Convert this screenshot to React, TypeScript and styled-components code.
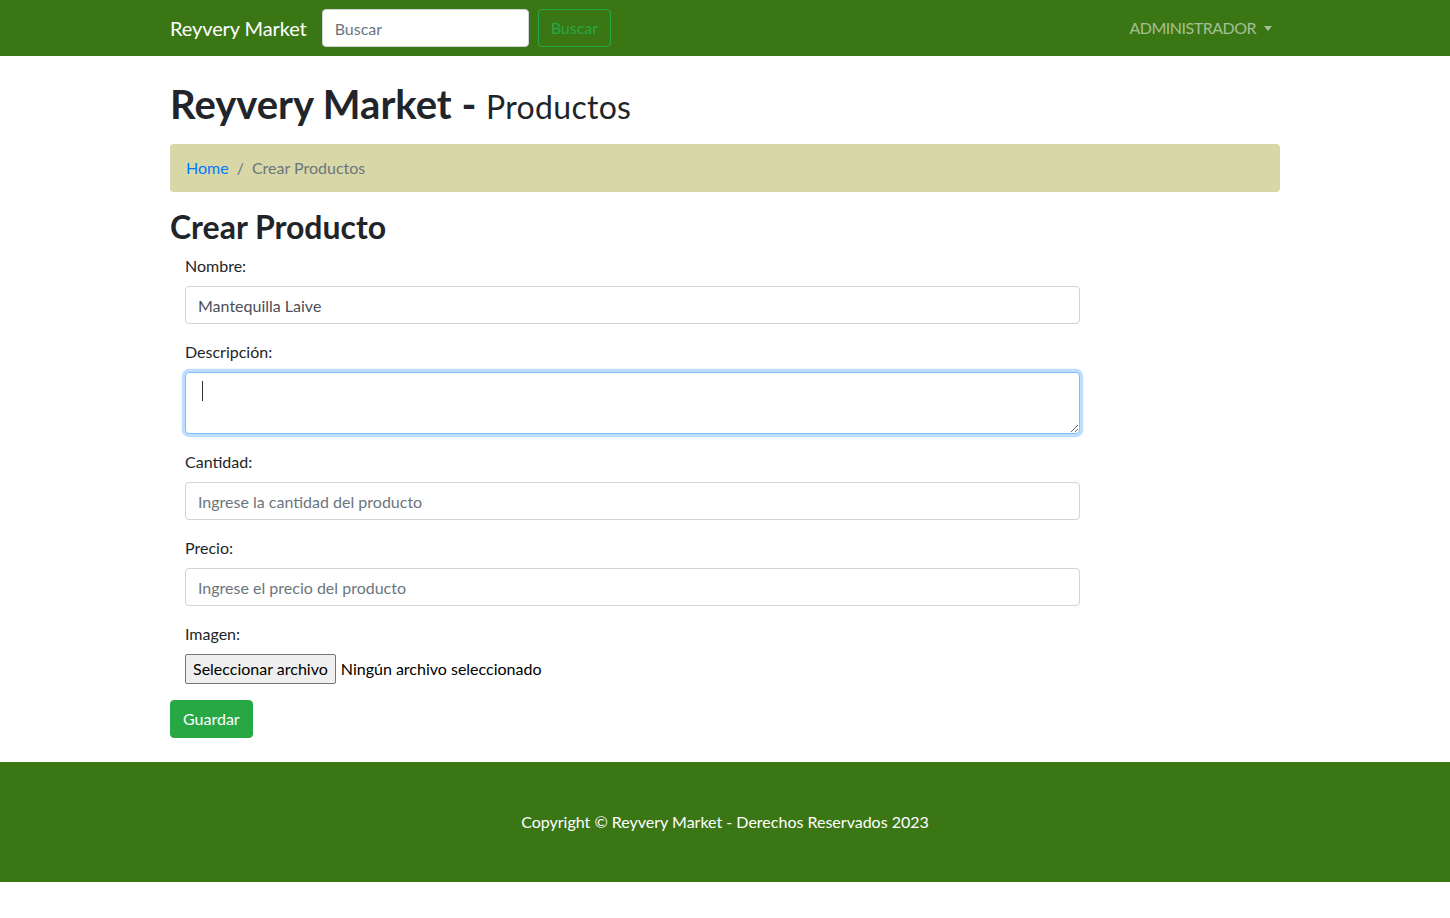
import React from 'react'
import styled, { createGlobalStyle } from 'styled-components'

//--------------------------------------
// constants
//--------------------------------------
const Colors = {
  green: '#3b7615',
  success: '#28a745',
  text: '#212529',
  muted: '#6c757d',
  link: '#007bff',
  crumb: '#d8d7a7',
  border: '#ced4da',
}

const GlobalStyle = createGlobalStyle`
  html, body {
    margin: 0;
    padding: 0;
    background: #fff;
  }
  body {
    font-family: Lato, "Noto Sans", "Liberation Sans", sans-serif;
    font-size: 16px;
    line-height: 1.5;
    color: ${Colors.text};
  }
  * { box-sizing: border-box; }
`

//--------------------------------------
// style
//--------------------------------------
const Container = styled.div`
  width: 1140px;
  margin: 0 auto;
  padding: 0 15px;
`

const NavBar = styled.nav`
  background-color: ${Colors.green};
  height: 56px;
`

const NavInner = styled(Container)`
  height: 100%;
  display: flex;
  align-items: center;
`

const Brand = styled.a`
  color: #fff;
  font-size: 20px;
  line-height: 30px;
  margin-right: 15px;
  letter-spacing: -0.1px;
  text-decoration: none;
`

const SearchForm = styled.form`
  display: flex;
  align-items: center;
  gap: 9px;
`

const SearchInput = styled.input`
  width: 207px;
  height: 38px;
  padding: 6px 12px;
  border: 1px solid ${Colors.border};
  border-radius: 4px;
  font: inherit;
  color: #495057;
  &::placeholder { color: #6c757d; }
`

const OutlineButton = styled.button`
  height: 38px;
  padding: 6px 12px;
  background: transparent;
  border: 1px solid ${Colors.success};
  border-radius: 4px;
  color: ${Colors.success};
  font: inherit;
`

const NavRight = styled.div`
  margin-left: auto;
  display: flex;
  align-items: center;
  gap: 8px;
  padding-right: 8px;
  color: rgba(255, 255, 255, 0.55);
  font-size: 16px;
  letter-spacing: -0.5px;
`

const Caret = styled.span`
  display: inline-block;
  width: 0;
  height: 0;
  border-top: 5px solid rgba(255, 255, 255, 0.55);
  border-left: 4px solid transparent;
  border-right: 4px solid transparent;
`

const Main = styled(Container)`
  padding-top: 24px;
  padding-bottom: 24px;
`

const Title = styled.h1`
  margin: 0 0 16px;
  font-size: 40px;
  line-height: 48px;
  height: 48px;
  font-weight: 700;
  small {
    font-size: 32px;
    font-weight: 400;
    line-height: 0;
    letter-spacing: 0.3px;
  }
`

const Breadcrumb = styled.ol`
  list-style: none;
  margin: 0 0 16px;
  padding: 12px 16px;
  background: ${Colors.crumb};
  border-radius: 4px;
  display: flex;
  color: ${Colors.muted};
`

const Crumb = styled.li`
  &:not(:first-child)::before {
    content: '/';
    padding: 0 8px;
    color: ${Colors.muted};
  }
  a {
    color: ${Colors.link};
    text-decoration: none;
  }
`

const SubTitle = styled.h2`
  margin: 0 0 8px;
  font-size: 32px;
  line-height: 38px;
  font-weight: 700;
`

const Form = styled.form`
  margin-bottom: 0;
`

const Group = styled.div`
  width: 925px;
  padding: 0 15px;
  margin-bottom: 16px;
`

const Label = styled.label`
  display: block;
  margin-bottom: 8px;
`

const Input = styled.input`
  display: block;
  width: 100%;
  height: 38px;
  padding: 6px 12px;
  border: 1px solid ${Colors.border};
  border-radius: 4px;
  font: inherit;
  color: #495057;
  &::placeholder { color: #6c757d; }
`

const TextArea = styled.textarea<{ $focus?: boolean }>`
  display: block;
  width: 100%;
  height: 62px;
  padding: 6px 12px;
  border: 1px solid ${(p) => (p.$focus ? '#80bdff' : Colors.border)};
  border-radius: 4px;
  font: inherit;
  color: #495057;
  box-shadow: ${(p) => (p.$focus ? '0 0 0 3.2px rgba(0, 123, 255, 0.25)' : 'none')};
  outline: none;
  resize: vertical;
`

const Cursor = styled.span`
  position: absolute;
  left: 17px;
  top: 9px;
  width: 1px;
  height: 20px;
  background: #333;
`

const TextAreaWrap = styled.div`
  position: relative;
`

const FileRow = styled.div`
  display: flex;
  align-items: center;
  gap: 5px;
  height: 30px;
`

const FileButton = styled.button`
  height: 30px;
  padding: 1px 7px;
  background: #efefef;
  border: 1px solid #767676;
  border-radius: 2px;
  font: inherit;
  color: #000;
`

const FileText = styled.span`
  color: #000;
`

const SaveButton = styled.button`
  height: 38px;
  padding: 6px 12px;
  background: ${Colors.success};
  border: 1px solid ${Colors.success};
  border-radius: 4px;
  color: #fff;
  font: inherit;
`

const Footer = styled.footer`
  background: ${Colors.green};
  height: 120px;
  display: flex;
  align-items: center;
  justify-content: center;
  color: #fff;
`

//----------------------------------
// component
//----------------------------------
const App = () => {
  return (
    <>
      <GlobalStyle />
      {/** @section Navbar */}
      <NavBar>
        <NavInner>
          <Brand href="#">Reyvery Market</Brand>
          <SearchForm onSubmit={(e) => e.preventDefault()}>
            <SearchInput placeholder="Buscar" />
            <OutlineButton type="button">Buscar</OutlineButton>
          </SearchForm>
          <NavRight>
            ADMINISTRADOR <Caret />
          </NavRight>
        </NavInner>
      </NavBar>

      {/** @section Content */}
      <Main>
        <Title>
          Reyvery Market - <small>Productos</small>
        </Title>
        <Breadcrumb>
          <Crumb>
            <a href="#">Home</a>
          </Crumb>
          <Crumb>Crear Productos</Crumb>
        </Breadcrumb>

        <SubTitle>Crear Producto</SubTitle>
        <Form onSubmit={(e) => e.preventDefault()}>
          <Group>
            <Label>Nombre:</Label>
            <Input defaultValue="Mantequilla Laive" />
          </Group>
          <Group>
            <Label>Descripción:</Label>
            <TextAreaWrap>
              <TextArea $focus rows={2} />
              <Cursor />
            </TextAreaWrap>
          </Group>
          <Group>
            <Label>Cantidad:</Label>
            <Input placeholder="Ingrese la cantidad del producto" />
          </Group>
          <Group>
            <Label>Precio:</Label>
            <Input placeholder="Ingrese el precio del producto" />
          </Group>
          <Group>
            <Label>Imagen:</Label>
            <FileRow>
              <FileButton type="button">Seleccionar archivo</FileButton>
              <FileText>Ningún archivo seleccionado</FileText>
            </FileRow>
          </Group>
          <SaveButton type="button">Guardar</SaveButton>
        </Form>
      </Main>

      {/** @section Footer */}
      <Footer>Copyright © Reyvery Market - Derechos Reservados 2023</Footer>
    </>
  )
}

export default App
